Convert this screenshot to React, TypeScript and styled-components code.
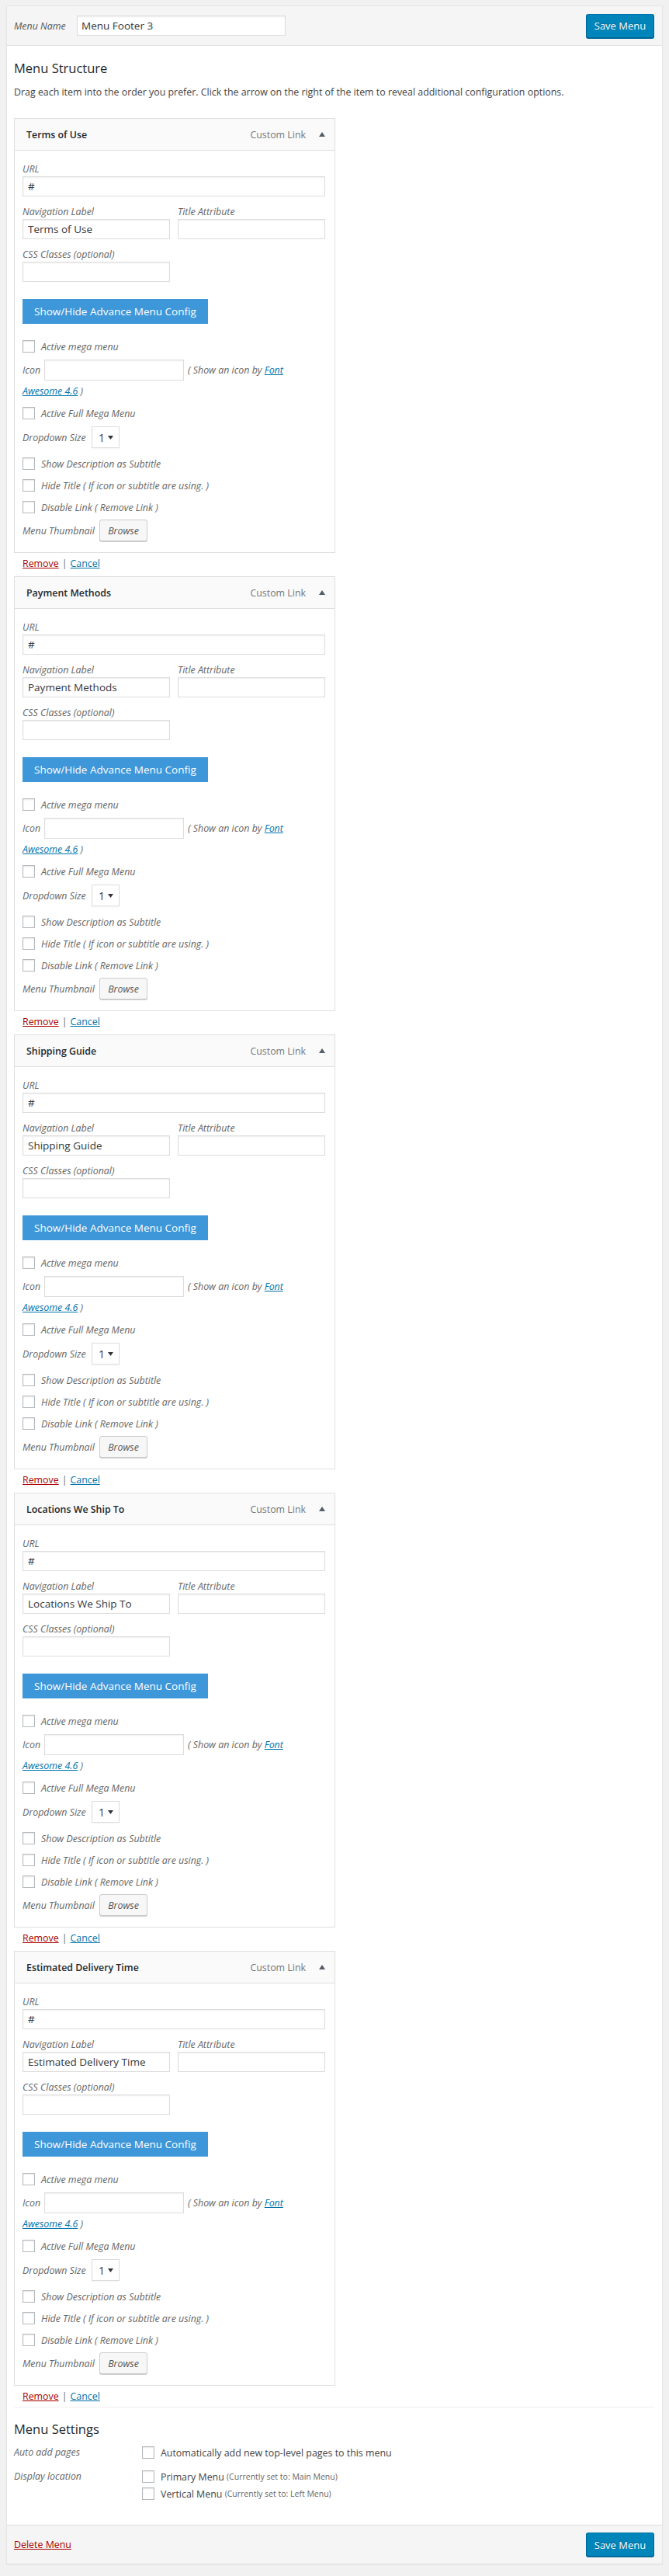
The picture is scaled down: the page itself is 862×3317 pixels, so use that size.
import React from "react";
import styled, { createGlobalStyle } from "styled-components";

const GlobalStyle = createGlobalStyle`
  body {
    margin: 0;
    background: #f1f1f1;
    font-family: "Open Sans", "Noto Sans", sans-serif;
    font-size: 12.4px;
    color: #444;
  }
  * { box-sizing: border-box; }
`;

const items = [
  "Terms of Use",
  "Payment Methods",
  "Shipping Guide",
  "Locations We Ship To",
  "Estimated Delivery Time",
];

export default function App() {
  return (
    <>
      <GlobalStyle />
      <Page>
        <Frame>
          <Bar>
            <NameGroup>
              <NameLabel>Menu Name</NameLabel>
              <NameInput defaultValue="Menu Footer 3" readOnly />
            </NameGroup>
            <SaveButton>Save Menu</SaveButton>
          </Bar>

          <Body>
            <Heading>Menu Structure</Heading>
            <Intro>
              Drag each item into the order you prefer. Click the arrow on the right of the
              item to reveal additional configuration options.
            </Intro>

            {items.map((title) => (
              <MenuItem key={title} title={title} />
            ))}

            <Settings>
              <Heading $top={16}>Menu Settings</Heading>
              <SettingsRow $top={9}>
                <SettingsLabel>Auto add pages</SettingsLabel>
                <Options>
                  <Option>
                    <Check type="checkbox" />
                    Automatically add new top-level pages to this menu
                  </Option>
                </Options>
              </SettingsRow>
              <SettingsRow $top={13}>
                <SettingsLabel>Display location</SettingsLabel>
                <Options>
                  <Option>
                    <Check type="checkbox" />
                    Primary Menu <Note>(Currently set to: Main Menu)</Note>
                  </Option>
                  <Option>
                    <Check type="checkbox" />
                    Vertical Menu <Note>(Currently set to: Left Menu)</Note>
                  </Option>
                </Options>
              </SettingsRow>
            </Settings>
          </Body>

          <Bar $bottom>
            <DangerLink href="#">Delete Menu</DangerLink>
            <SaveButton>Save Menu</SaveButton>
          </Bar>
        </Frame>
      </Page>
    </>
  );
}

function MenuItem({ title }: { title: string }) {
  return (
    <>
      <Item>
        <ItemHead>
          <ItemTitle>{title}</ItemTitle>
          <ItemType>Custom Link</ItemType>
          <svg width="8" height="6" viewBox="0 0 8 6">
            <polygon points="4,0 8,6 0,6" fill="#555d66" />
          </svg>
        </ItemHead>
        <ItemBody>
          <Field>
            <FieldLabel>URL</FieldLabel>
            <TextInput defaultValue="#" readOnly />
          </Field>
          <Pair>
            <Field $top={11}>
              <FieldLabel>Navigation Label</FieldLabel>
              <TextInput defaultValue={title} readOnly />
            </Field>
            <Field $top={11}>
              <FieldLabel>Title Attribute</FieldLabel>
              <TextInput readOnly />
            </Field>
          </Pair>
          <Field $top={11} $width={190}>
            <FieldLabel>CSS Classes (optional)</FieldLabel>
            <TextInput readOnly />
          </Field>

          <AdvanceButton>Show/Hide Advance Menu Config</AdvanceButton>

          <CheckRow $top={21}>
            <Check type="checkbox" />
            Active mega menu
          </CheckRow>

          <InlineRow $top={9}>
            <InlineLabel $width={28}>Icon</InlineLabel>
            <TextInput $width={180} $height={27} readOnly />
            <Hint>
              ( Show an icon by <Link href="#">Font</Link>
            </Hint>
          </InlineRow>
          <HintLine>
            <Link href="#">Awesome 4.6</Link> )
          </HintLine>

          <CheckRow $top={11}>
            <Check type="checkbox" />
            Active Full Mega Menu
          </CheckRow>

          <InlineRow $top={9}>
            <InlineLabel $width={89}>Dropdown Size</InlineLabel>
            <SelectBox>
              <span>1</span>
              <svg width="7" height="5" viewBox="0 0 7 5">
                <polygon points="0,0 7,0 3.5,5" fill="#32373c" />
              </svg>
            </SelectBox>
          </InlineRow>

          <CheckRow $top={12}>
            <Check type="checkbox" />
            Show Description as Subtitle
          </CheckRow>
          <CheckRow $top={12}>
            <Check type="checkbox" />
            Hide Title ( If icon or subtitle are using. )
          </CheckRow>
          <CheckRow $top={12}>
            <Check type="checkbox" />
            Disable Link ( Remove Link )
          </CheckRow>

          <InlineRow $top={8}>
            <InlineLabel $width={99}>Menu Thumbnail</InlineLabel>
            <BrowseButton>Browse</BrowseButton>
          </InlineRow>
        </ItemBody>
      </Item>
      <ItemActions>
        <DangerLink href="#">Remove</DangerLink>
        <Sep>|</Sep>
        <Link href="#">Cancel</Link>
      </ItemActions>
    </>
  );
}

const Page = styled.div`
  padding: 7px 8px 9px 8px;
`;

const Frame = styled.div`
  background: #fff;
  border: 1px solid #e5e5e5;
  box-shadow: 0 1px 1px rgba(0, 0, 0, 0.04);
`;

const Bar = styled.div<{ $bottom?: boolean }>`
  height: ${(p) => (p.$bottom ? 50 : 51)}px;
  background: #f5f5f5;
  display: flex;
  align-items: center;
  justify-content: space-between;
  padding: 0 10px 0 9px;
  ${(p) => (p.$bottom ? "border-top: 1px solid #dfdfdf;" : "border-bottom: 1px solid #dfdfdf;")}
`;

const NameGroup = styled.div`
  display: flex;
  align-items: center;
`;

const NameLabel = styled.span`
  font-style: italic;
  color: #555;
  width: 81px;
`;

const NameInput = styled.input`
  width: 269px;
  height: 26px;
  border: 1px solid #ddd;
  box-shadow: inset 0 1px 2px rgba(0, 0, 0, 0.07);
  padding: 0 5px;
  font-family: inherit;
  font-size: 13.5px;
  color: #32373c;
  outline: none;
`;

const SaveButton = styled.button`
  width: 88px;
  height: 31px;
  background: #0085ba;
  border: 1px solid;
  border-color: #0073aa #006799 #006799;
  border-radius: 3px;
  box-shadow: 0 1px 0 #006799;
  color: #fff;
  font-family: inherit;
  font-size: 13px;
  text-shadow: 0 -1px 1px #006799;
  padding: 0;
`;

const Body = styled.div`
  padding: 0 10px 32px 9px;
`;

const Heading = styled.h3<{ $top?: number }>`
  margin: ${(p) => p.$top ?? 17}px 0 0;
  font-size: 16.5px;
  font-weight: 400;
  line-height: 24px;
  color: #23282d;
`;

const Intro = styled.p`
  margin: 9px 0 24px;
  line-height: 19px;
`;

const Item = styled.div`
  width: 414px;
`;

const ItemHead = styled.div`
  height: 42px;
  border: 1px solid #dfdfdf;
  background: #fafafa;
  display: flex;
  align-items: center;
  padding: 0 12px 0 15px;
`;

const ItemTitle = styled.span`
  flex: 1;
  font-weight: 600;
  color: #23282d;
`;

const ItemType = styled.span`
  color: #72777c;
  margin-right: 17px;
`;

const ItemBody = styled.div`
  border: 1px solid #dfdfdf;
  border-top: none;
  padding: 15px 12px 14px 10px;
`;

const Field = styled.div<{ $top?: number; $width?: number }>`
  margin-top: ${(p) => p.$top ?? 0}px;
  width: ${(p) => (p.$width ? `${p.$width}px` : "auto")};
`;

const Pair = styled.div`
  display: grid;
  grid-template-columns: 1fr 1fr;
  column-gap: 10px;
`;

const FieldLabel = styled.label`
  display: block;
  font-style: italic;
  color: #666;
  line-height: 18px;
`;

const TextInput = styled.input<{ $width?: number; $height?: number }>`
  display: block;
  width: ${(p) => (p.$width ? `${p.$width}px` : "100%")};
  height: ${(p) => p.$height ?? 26}px;
  border: 1px solid #ddd;
  box-shadow: inset 0 1px 2px rgba(0, 0, 0, 0.07);
  padding: 0 6px;
  font-family: inherit;
  font-size: 13.5px;
  color: #32373c;
  outline: none;
`;

const AdvanceButton = styled.button`
  display: block;
  margin-top: 22px;
  height: 32px;
  padding: 0 15px;
  background: #3e97d8;
  border: none;
  color: #fff;
  font-family: inherit;
  font-size: 13.5px;
`;

const CheckRow = styled.label<{ $top: number }>`
  display: flex;
  align-items: center;
  margin-top: ${(p) => p.$top}px;
  height: 16px;
  font-style: italic;
  color: #666;
`;

const Check = styled.input`
  appearance: none;
  flex: none;
  width: 16px;
  height: 16px;
  margin: 0 8px 0 0;
  border: 1px solid #b4b9be;
  background: #fff;
  box-shadow: inset 0 1px 2px rgba(0, 0, 0, 0.1);
`;

const InlineRow = styled.div<{ $top: number }>`
  display: flex;
  align-items: center;
  margin-top: ${(p) => p.$top}px;
  font-style: italic;
  color: #666;
`;

const InlineLabel = styled.span<{ $width: number }>`
  width: ${(p) => p.$width}px;
  flex: none;
`;

const Hint = styled.span`
  margin-left: 5px;
`;

const HintLine = styled.div`
  margin-top: 5px;
  line-height: 18px;
  font-style: italic;
  color: #666;
`;

const Link = styled.a`
  color: #0073aa;
  text-decoration: underline;
`;

const DangerLink = styled.a`
  color: #a00;
  text-decoration: underline;
`;

const SelectBox = styled.div`
  width: 36px;
  height: 28px;
  border: 1px solid #ddd;
  box-shadow: 0 1px 2px rgba(0, 0, 0, 0.05);
  display: flex;
  align-items: center;
  justify-content: space-between;
  padding: 0 7px 0 8px;
  font-style: normal;
  font-size: 14px;
  color: #32373c;
`;

const BrowseButton = styled.button`
  width: 62px;
  height: 28px;
  padding: 0;
  background: #f7f7f7;
  border: 1px solid #ccc;
  border-radius: 3px;
  box-shadow: 0 1px 0 #ccc;
  font-family: inherit;
  font-style: italic;
  font-size: 12.4px;
  color: #555;
`;

const ItemActions = styled.div`
  margin: 5px 0 7px 11px;
  line-height: 18px;
`;

const Sep = styled.span`
  color: #666;
  margin: 0 4px;
`;

const Settings = styled.div`
  margin-top: -3px;
  border-top: 1px solid #eee;
`;

const SettingsRow = styled.div<{ $top: number }>`
  display: grid;
  grid-template-columns: 165px 1fr;
  margin-top: ${(p) => p.$top}px;
`;

const SettingsLabel = styled.div`
  font-style: italic;
  color: #666;
  line-height: 18px;
`;

const Options = styled.div`
  display: flex;
  flex-direction: column;
  gap: 6px;
  padding-top: 1px;
`;

const Option = styled.label`
  display: flex;
  align-items: center;
  height: 16px;
  color: #444;
  white-space: pre;
`;

const Note = styled.span`
  font-size: 10.5px;
  color: #666;
`;
